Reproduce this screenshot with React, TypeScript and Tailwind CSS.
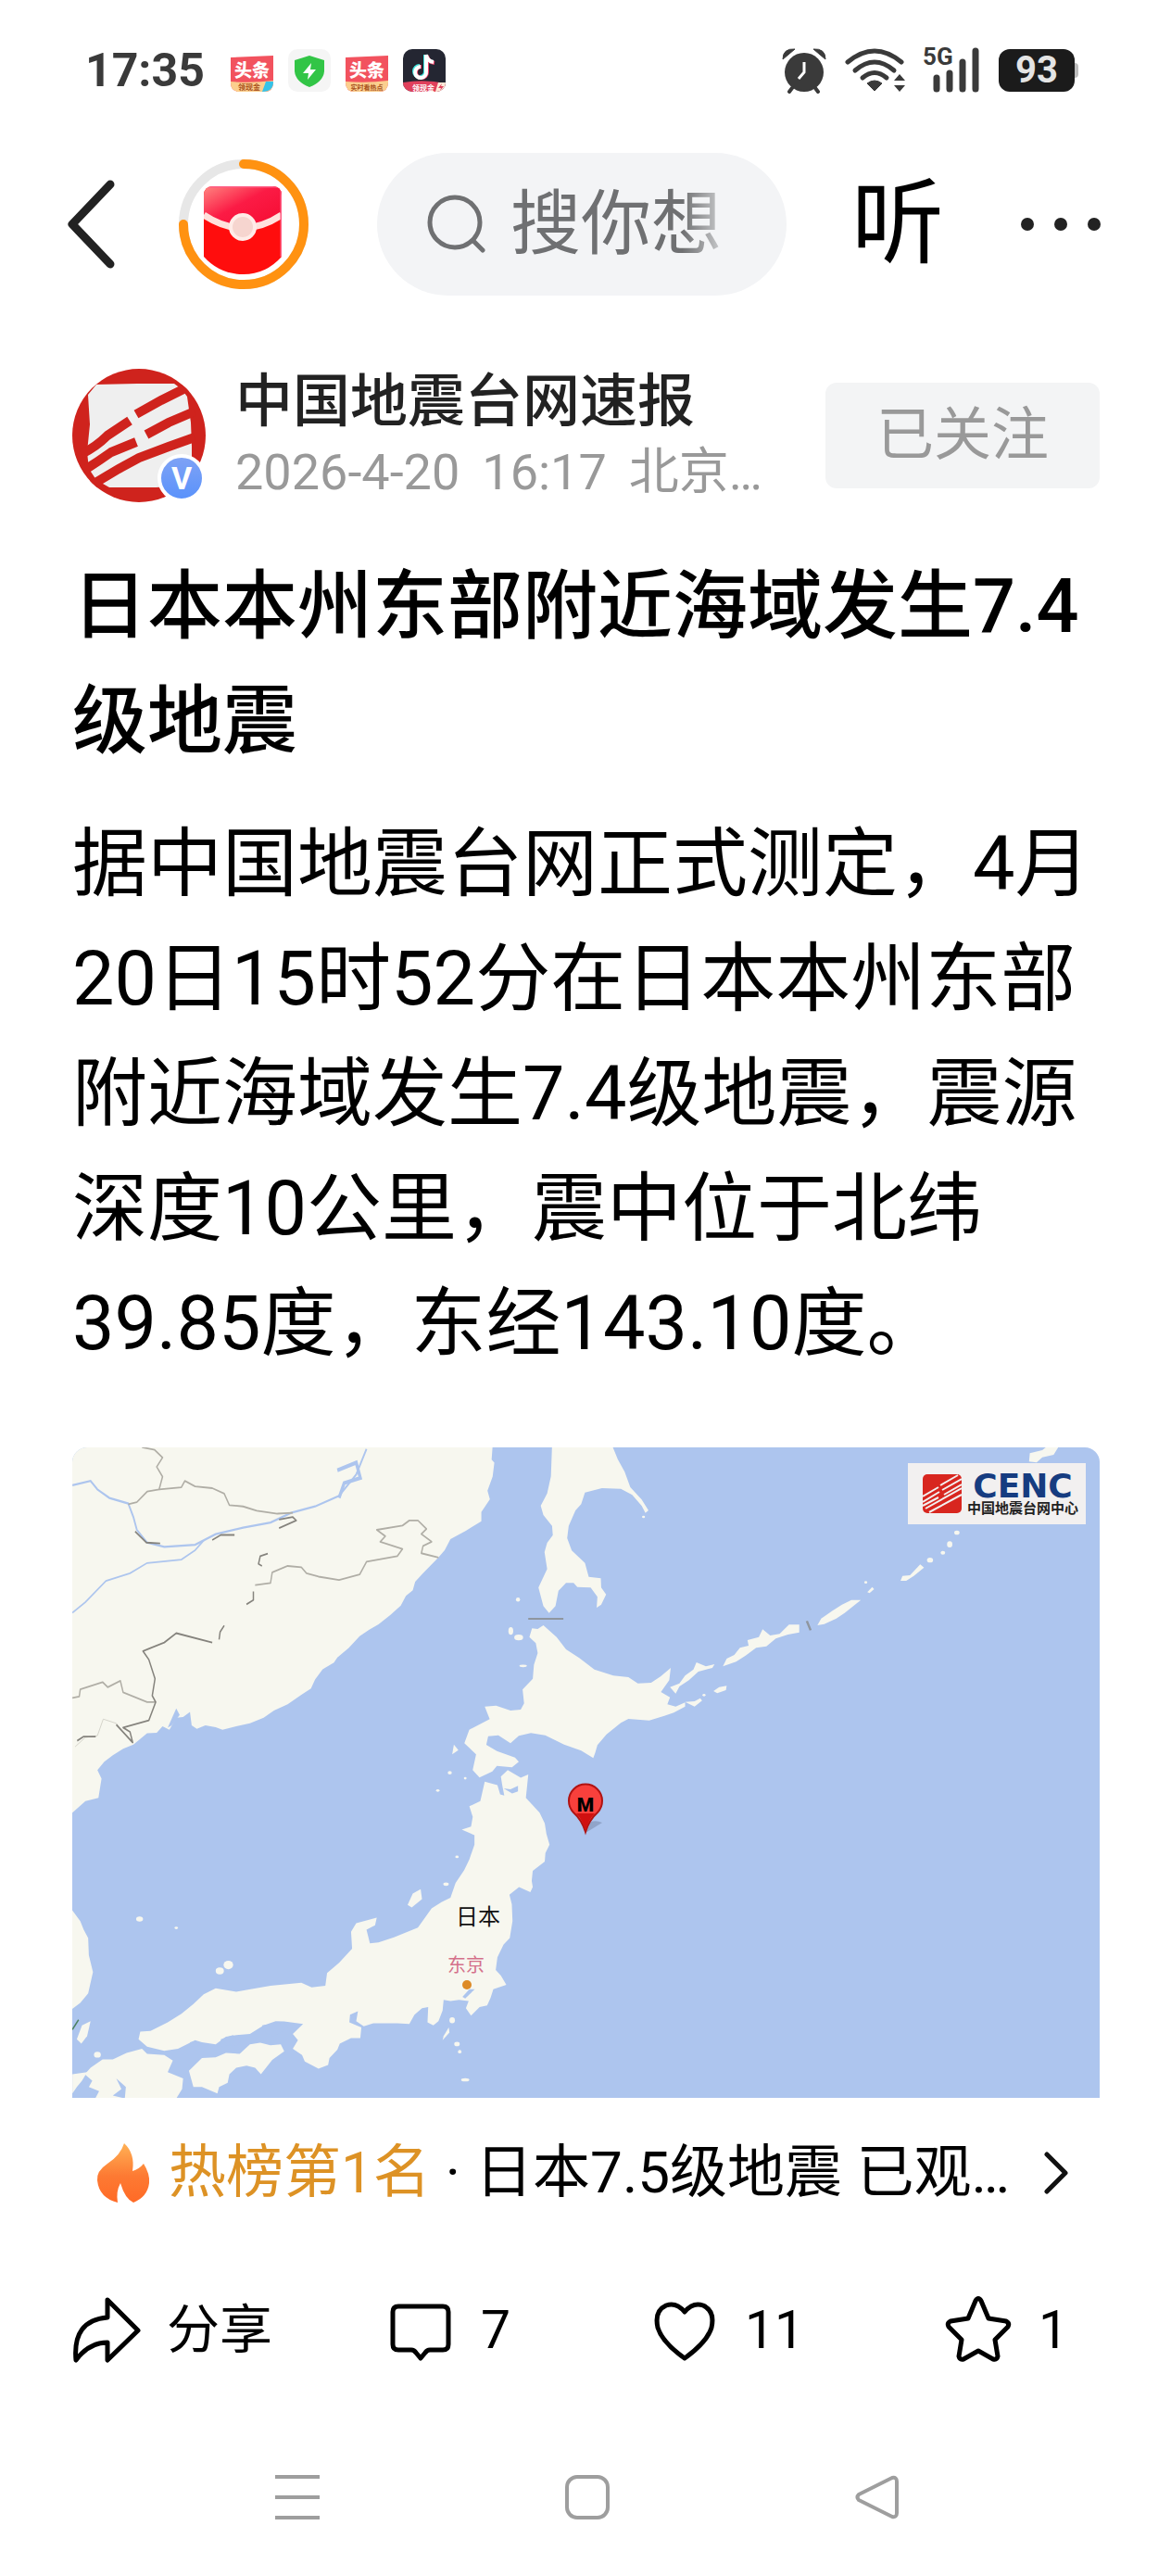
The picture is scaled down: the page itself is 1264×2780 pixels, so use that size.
import React from 'react';

const StatusBar: React.FC = () => (
  <div className="flex h-[152px] items-center justify-between pl-[92px] pr-[100px] text-[#3a3a3a]">
    <div className="flex items-center gap-4">
      <span className="mr-3 text-[50px] leading-none font-bold">17:35</span>
      <ToutiaoIcon label="领现金" flash />
      <svg viewBox="0 0 46 46" className="size-[46px]" aria-hidden="true">
        <rect width="46" height="46" rx="10" fill="#f5f5f5" />
        <path d="M23 7 39 12V24Q38 35 23 41 8 35 7 24V12Z" fill="#32c546" />
        <path d="M25 15 16 26H22L21 33 30 22H24Z" fill="#fff" />
      </svg>
      <ToutiaoIcon label="实时看热点" />
      <svg viewBox="0 0 46 46" className="size-[46px]" aria-hidden="true">
        <clipPath id="douyin">
          <rect width="46" height="46" rx="10" />
        </clipPath>
        <g clipPath="url(#douyin)">
          <rect width="46" height="46" fill="#242632" />
          <g fill="none" strokeWidth="4">
            <path d="M24 6V24A6 6 0 1 1 18 18M24 6Q25 13 32 14" stroke="#3ee6e0" />
            <path d="M26 7V25A6 6 0 1 1 20 19M26 7Q27 14 34 15" stroke="#f2446b" />
            <path d="M25 6V24A6 6 0 1 1 19 19M25 6Q26 13 33 14" stroke="#fff" />
          </g>
          <path d="M0 36Q23 32 46 37V46H0Z" fill="#e0405c" />
          <path d="M38 36H46V46H35Z" fill="#fde9d8" />
          <path d="M42 37 38 42H41L40 45 44 40H41Z" fill="#e0405c" />
          <text x="10" y="45" fontSize="8" fontWeight="700" fill="#fff">领现金</text>
        </g>
      </svg>
    </div>
    <div className="flex items-center">
      <svg viewBox="0 0 48 50" className="mr-5 h-[50px] w-[48px]" aria-hidden="true">
        <circle cx="24" cy="27" r="21" fill="currentColor" />
        <path d="M11 44 8 48M36 44 39 48" stroke="currentColor" strokeWidth="4" strokeLinecap="round" />
        <path d="M1 13Q1 1 14 2ZM47 13Q47 1 34 2Z" fill="currentColor" stroke="currentColor" strokeLinejoin="round" />
        <path d="M24 16V27L18 34" fill="none" stroke="#fff" strokeWidth="3" />
      </svg>
      <svg viewBox="0 0 66 50" className="mr-[18px] h-[50px] w-[66px]" aria-hidden="true">
        <g fill="none" stroke="currentColor" strokeWidth="5" strokeLinecap="round">
          <path d="M3 16Q32-8 61 16" />
          <path d="M11 25Q32 7 53 25" />
          <path d="M19 33Q32 22 45 33" />
        </g>
        <path d="M24 39Q32 33 40 39L32 47Z" fill="currentColor" stroke="currentColor" strokeLinejoin="round" />
        <path d="M59 29 65 36H53ZM59 48 65 41H53Z" fill="currentColor" />
      </svg>
      <div className="relative mr-5 h-[50px] w-[62px]">
        <span className="absolute top-0 left-0 text-[26px] leading-5 font-bold">5G</span>
        <svg viewBox="0 0 62 50" className="h-full w-full" aria-hidden="true">
          <path d="M15 33V45M29 28V45M43 16V45M57 4V45" stroke="currentColor" strokeWidth="7" strokeLinecap="round" />
        </svg>
      </div>
      <div className="flex items-center">
        <span className="flex h-[46px] w-[82px] items-center justify-center rounded-xl bg-[#1b1b1b] text-[40px] leading-none font-bold text-[#e4e4e4]">
          93
        </span>
        <span className="h-4 w-1 rounded-r bg-[#bdbdbd]" />
      </div>
    </div>
  </div>
);

const ToutiaoIcon: React.FC<{ label: string; flash?: boolean }> = ({ label, flash }) => (
  <svg viewBox="0 0 46 46" className="size-[46px]" aria-hidden="true">
    <path d="M0 9 46 7V36Q46 46 36 46H10Q0 46 0 36Z" fill="#f2525e" />
    <path d="M0 35Q23 37 46 34V36Q46 46 36 46H10Q0 46 0 36Z" fill="#fbcf8e" />
    {flash && <path d="M38 35H46Q46 46 34 46Z" fill="#35c3ea" />}
    <text x="23" y="30" textAnchor="middle" fontSize="19" fontWeight="900" fill="#fff">头条</text>
    <text x={flash ? 20 : 23} y="44" textAnchor="middle" fontSize={flash ? 8 : 7} fontWeight="700" fill="#a8511c">{label}</text>
  </svg>
);

const Header: React.FC = () => (
  <header className="flex h-[180px] items-center pr-[76px] pl-[72px]">
    <button aria-label="返回" className="mr-[68px]">
      <svg viewBox="0 0 53 98" className="h-[98px] w-[53px]" fill="none" stroke="#222" strokeWidth="9" strokeLinecap="round" strokeLinejoin="round">
        <path d="M47 6 6 49 47 92" />
      </svg>
    </button>
    <button aria-label="红包" className="mr-[74px]">
      <svg viewBox="0 0 140 140" className="size-[140px]">
        <defs>
          <linearGradient id="packet" x1="0" y1="0" x2="1" y2="1">
            <stop offset="0" stopColor="#ff8580" />
            <stop offset="0.45" stopColor="#fb1b45" />
            <stop offset="1" stopColor="#f50a30" />
          </linearGradient>
          <clipPath id="packetClip">
            <path d="M27 39Q27 29 37 29H101Q111 29 111 39V105Q94 124 70 124 44 124 27 105Z" />
          </clipPath>
        </defs>
        <circle cx="70" cy="70" r="65" fill="none" stroke="#e7e7e7" strokeWidth="10" />
        <path d="M70 5A65 65 0 1 1 5 70" fill="none" stroke="#ff9211" strokeWidth="10" strokeLinecap="round" />
        <g clipPath="url(#packetClip)">
          <rect x="27" y="29" width="84" height="96" fill="#ff0d0d" />
          <path d="M27 29H111V60Q70 88 27 60Z" fill="url(#packet)" />
          <path d="M27 60Q69 88 111 60" fill="none" stroke="#ffe1dc" strokeWidth="7" />
          <path d="M27 29H111V105" fill="none" stroke="#ff5d84" strokeWidth="3" />
        </g>
        <circle cx="69" cy="73" r="13" fill="#f6d5cf" stroke="#ffece8" strokeWidth="4" />
      </svg>
    </button>
    <label className="flex h-[154px] min-w-0 flex-1 items-center gap-6 rounded-full bg-[#f3f4f6] pr-[60px] pl-[54px]">
      <svg viewBox="0 0 66 66" className="size-[66px] shrink-0" fill="none" stroke="#6f7072" strokeWidth="5" strokeLinecap="round">
        <circle cx="30" cy="31" r="27" />
        <path d="M50 51 60 61" />
      </svg>
      <input
        aria-label="搜索"
        placeholder="搜你想"
        className="h-[110px] w-full min-w-0 bg-transparent text-[76px] outline-none placeholder:text-[#6f7072] [mask-image:linear-gradient(to_right,black_78%,transparent_104%)]"
      />
    </label>
    <button className="mr-[83px] ml-[70px] shrink-0 text-[100px] leading-none text-black">听</button>
    <button aria-label="更多" className="flex gap-[22px]">
      <span className="size-[14px] rounded-full bg-[#222]" />
      <span className="size-[14px] rounded-full bg-[#222]" />
      <span className="size-[14px] rounded-full bg-[#222]" />
    </button>
  </header>
);

const Author: React.FC = () => (
  <div className="mt-[66px] flex h-[144px] items-center">
    <div className="relative mr-8 size-[144px] shrink-0">
      <svg viewBox="0 0 144 144" className="h-full w-full" aria-hidden="true">
        <clipPath id="avatar">
          <circle cx="72" cy="72" r="72" />
        </clipPath>
        <g clipPath="url(#avatar)">
          <rect width="144" height="144" fill="#cf231d" />
          <path d="M17 28 26 17 70 16 110 16 118 22 124 30 126 44 128 58 129 84 129 126 90 128 40 128 26 120 18 108 16 90 19 60Z" fill="#efefef" />
          <g fill="none" stroke="#cf231d" strokeWidth="10">
            <path d="M10 92Q26 84 38 72L62 56" />
            <path d="M69 49 96 34 128 18" />
            <path d="M12 110Q28 100 42 90L69 79" />
            <path d="M80 71 104 58 132 46" />
            <path d="M20 126 50 108 72 96 104 84 132 74" />
          </g>
        </g>
      </svg>
      <span className="absolute right-0 bottom-0 flex size-[52px] items-center justify-center rounded-full border-4 border-white bg-gradient-to-b from-[#7ea2f5] to-[#5a92fb] text-[34px] leading-none font-bold text-white">
        V
      </span>
    </div>
    <div className="min-w-0 flex-1">
      <p className="text-[62px] leading-[80px] font-medium text-[#222]">中国地震台网速报</p>
      <p className="flex gap-6 text-[54px] leading-[72px] whitespace-nowrap text-[#999]">
        <span>2026-4-20</span>
        <span>16:17</span>
        <span>北京…</span>
      </p>
    </div>
    <button className="h-[114px] w-[296px] shrink-0 rounded-xl bg-[#f3f4f5] text-[62px] leading-none text-[#999]">已关注</button>
  </div>
);

const EpicenterMap: React.FC = () => (
  <div className="relative mt-[71px] overflow-hidden rounded-t-2xl">
    <svg viewBox="0 0 1109 702" className="block w-full" role="img" aria-label="震中位置地图">
      <rect width="1109" height="702" fill="#adc5ee" />
      <g transform="translate(-8 -12) scale(0.37 0.459)">
        <g fill="#f7f7ef">
          {/* mainland */}
          <path d="M0 0H1250L1245 55 1253 62 1248 95 1233 128 1240 148 1215 178 1215 200 1170 222 1125 242 1108 268 1090 285 1045 322 1022 342 1015 362 995 375 980 398 950 420 915 442 888 455 860 470 828 498 795 520 785 532 752 548 730 572 718 593 690 608 650 630 610 645 580 662 540 675 500 682 460 690 440 684 410 680 385 688 370 680 365 648 345 660 325 662 305 690 285 682 268 697 240 698 200 725 170 735 140 750 115 765 95 785 107 805 98 850 60 858 22 885H0Z" />
          {/* korea and tsushima */}
          <path d="M0 1100 22 1115 45 1140 55 1160 68 1180 70 1220 82 1260 68 1310 45 1332 0 1360Z" />
          <path d="M50 1385 75 1375 65 1410 48 1428 35 1418Z" />
          {/* honshu */}
          <path d="M1225 812 1262 820 1270 842 1282 845 1276 820 1272 800 1292 785 1330 803 1352 795 1345 850 1362 865 1385 885 1400 910 1405 935 1414 960 1402 980 1400 1000 1365 1022 1362 1045 1365 1060 1358 1072 1325 1060 1297 1078 1304 1100 1306 1140 1298 1180 1280 1195 1262 1225 1257 1255 1272 1268 1288 1290 1250 1300 1242 1320 1232 1338 1210 1342 1185 1362 1170 1345 1178 1328 1150 1325 1125 1328 1105 1325 1102 1350 1090 1375 1075 1385 1058 1378 1060 1342 1042 1345 1020 1360 1005 1382 970 1380 900 1380 872 1387 850 1375 855 1352 832 1360 830 1378 865 1390 862 1415 835 1415 802 1428 795 1442 772 1462 768 1478 740 1487 700 1470 692 1455 665 1440 680 1420 665 1405 695 1382 640 1376 615 1375 580 1385 540 1405 500 1408 470 1412 440 1430 400 1425 380 1420 330 1440 290 1445 240 1435 215 1418 220 1400 250 1398 300 1378 340 1358 375 1335 405 1312 440 1298 500 1306 530 1302 600 1292 690 1285 720 1296 760 1292 765 1262 800 1238 838 1205 835 1165 850 1145 910 1132 905 1150 880 1160 890 1192 915 1190 960 1178 1030 1155 1070 1110 1100 1095 1125 1085 1140 1050 1165 1020 1180 995 1195 960 1195 938 1158 925 1185 918 1190 895 1180 870 1212 858Z" />
          {/* shikoku and kyushu */}
          <path d="M362 1492 400 1462 440 1460 470 1450 510 1452 540 1430 570 1426 600 1432 630 1430 640 1446 605 1466 572 1500 555 1485 530 1480 500 1485 480 1500 475 1520 450 1530 445 1545 400 1530 375 1530Z" />
          <path d="M58 1500 75 1485 110 1465 140 1465 180 1450 225 1440 240 1452 290 1455 315 1468 300 1495 345 1510 342 1535 315 1570 80 1570 100 1540 70 1530 80 1515Z" />
          <path d="M22 1500 65 1495 50 1515 35 1530 22 1545Z" />
          {/* sado, oki and the small islands */}
          <path d="M1015 1075 1038 1065 1042 1088 1012 1108 1000 1102Z" />
          <path d="M1135 725 1148 738 1130 748Z" />
          <path d="M1105 1410 1120 1390 1122 1402 1102 1420Z" />
          <ellipse cx="477" cy="1243" rx="14" ry="10" />
          <ellipse cx="452" cy="1257" rx="12" ry="8" />
          <ellipse cx="218" cy="1135" rx="10" ry="6" />
          <ellipse cx="325" cy="1156" rx="5" ry="3" />
          <ellipse cx="95" cy="1454" rx="10" ry="7" />
          <ellipse cx="1130" cy="1373" rx="8" ry="7" />
          <ellipse cx="1144" cy="1429" rx="8" ry="5" />
          <ellipse cx="1152" cy="1447" rx="5" ry="4" />
          <ellipse cx="1168" cy="1513" rx="12" ry="4" />
          <ellipse cx="1301" cy="458" rx="7" ry="9" />
          <ellipse cx="1324" cy="473" rx="13" ry="7" />
          <ellipse cx="1322" cy="384" rx="6" ry="5" />
          <ellipse cx="1337" cy="540" rx="11" ry="3" />
          <ellipse cx="1123" cy="791" rx="6" ry="4" />
          <ellipse cx="1088" cy="833" rx="5" ry="3" />
          <ellipse cx="1168" cy="804" rx="4" ry="3" />
          <ellipse cx="1144" cy="989" rx="5" ry="3" />
          <ellipse cx="1112" cy="1053" rx="8" ry="4" />
        </g>
        {/* bays and the inland sea */}
        <g fill="#adc5ee">
          <path d="M1280 828 1300 830 1322 822 1322 835 1305 840Z" />
          <path d="M575 1385 640 1378 650 1390 610 1412 585 1402Z" />
          <path d="M455 1418 490 1408 512 1422 500 1432 455 1434Z" />
          <path d="M1160 1318 1180 1300 1196 1300 1168 1322Z" />
          <path d="M365 1425 382 1422 385 1432 367 1435Z" />
          <path d="M150 1510 178 1530 175 1557 140 1550 165 1535Z" />
          <path d="M300 685 325 640 335 655 312 680Z" />
        </g>
        {/* rivers */}
        <g fill="none" stroke="#adc5ee">
          <path d="M22 115 75 105 95 125 130 145 185 158 200 190 210 220 240 250 290 260 380 255 440 230 520 215 600 203 660 180 730 165 800 140 850 90 880 30" strokeWidth="5" />
          <path d="M22 415 60 390 120 340 190 322 240 298 340 290 380 268 405 245" strokeWidth="4" />
          <path d="M795 80 850 62 862 98 815 110 800 145" strokeWidth="9" />
        </g>
        {/* borders */}
        <g fill="none" stroke="#b0aea6" strokeWidth="4" strokeLinejoin="round">
          <path d="M225 26 262 32 285 50 268 72 285 95 275 125 240 130 210 155 185 160" />
          <path d="M275 125 340 120 350 105 380 118 430 122 465 135 480 162 520 165 560 175 620 182 665 180" />
          <path d="M1090 285 1040 275 1045 258 1070 248 1040 230 1055 218 1030 198 1005 198 985 210 910 220 935 235 920 248 985 265 970 282 880 295 860 325 800 338 740 330 705 322 690 308 650 305 605 320 600 345 555 350" />
          <path d="M22 615 42 612 45 595 110 578 125 590 162 575 170 602 240 625 265 625" />
          <path d="M30 730 60 708 95 704 112 665 150 675 195 720" stroke="#cfcdc4" strokeWidth="2" />
        </g>
        <g fill="none" stroke="#85837d" strokeWidth="4" strokeLinejoin="round">
          <path d="M430 485 325 463 290 485 228 505 245 525 263 570 255 610 265 625 245 668 170 685 190 695 198 720 150 678" />
          <path d="M205 224 238 250 278 252M430 244 455 232 495 232M625 216 675 198 665 190 625 196" />
          <path d="M592 276 570 282 565 300 575 305M550 365 550 385 530 395M465 445 453 460 450 478M36 716 55 706 90 706" />
          <path d="M22 1395 40 1372" stroke="#4b8060" />
        </g>
      </g>
      <g transform="translate(482 -12) scale(0.408 0.3333)">
        <g fill="#f7f7ef">
          {/* sakhalin */}
          <path d="M88 30 85 130 75 185 58 225 65 255 88 290 90 320 75 345 68 375 75 430 52 490 65 550 80 572 97 550 105 500 125 475 145 475 155 488 190 490 208 520 206 555 218 545 231 512 218 490 217 460 185 455 175 410 140 370 128 330 132 290 150 240 165 220 175 182 220 168 270 170 300 190 325 225 335 248 343 240 325 205 295 165 280 115 262 75 247 30Z" />
          {/* hokkaido */}
          <path d="M65 612 100 650 125 690 160 718 200 755 250 775 290 780 315 800 350 798 375 778 402 750 398 790 376 828 400 845 393 868 415 875 440 862 440 875 410 895 385 905 345 920 290 915 270 928 232 965 208 1000 202 1025 197 1042 165 1018 120 998 70 968 32 961 0 970-22 994-54 968-81 971-86 999-58 1019-10 1040 0 1054-18 1072-58 1067-70 1085-104 1105-122 1081-113 1030-144 994-131 950-77 916-90 875-60 872-22 888 5 885 14 865 10 820 37 785 40 740 50 702 45 670 28 650 35 622 50 624Z" />
          {/* kuril chain */}
          <path d="M400 812 425 800 440 775 462 755 470 732 495 745 518 738 512 750 475 762 450 790 425 810 415 833Z" />
          <path d="M540 745 550 720 570 708 585 685 608 678 605 660 635 650 645 625 665 645 690 640 715 610 742 610 742 635 712 642 680 655 655 680 628 685 600 710 575 730Z" />
          <path d="M790 612 800 590 830 565 855 545 880 530 905 530 885 550 862 572 840 590 808 608Z" />
          <path d="M1010 468 1015 452 1035 450 1062 415 1072 425 1045 452 1025 468Z" />
          <path d="M922 505 935 488 940 495 928 508Z" />
          <path d="M1350 82 1352 55 1385 45 1400 30H1430L1415 60 1385 68 1370 85Z" />
          <path d="M515 825 530 812 550 808 548 822 525 832Z" />
          <path d="M440 860 465 858 480 848 485 856 465 875Z" />
          <circle cx="1088" cy="401" r="8" />
          <circle cx="1122" cy="377" r="6" />
          <ellipse cx="1140" cy="350" rx="7" ry="10" />
          <circle cx="1159" cy="312" r="7" />
          <circle cx="490" cy="838" r="4" />
          <circle cx="918" cy="473" r="4" />
          <circle cx="330" cy="261" r="4" />
        </g>
        <path d="M25 591H118M762 598 772 628" fill="none" stroke="#8f969f" strokeWidth="6" />
      </g>

      <text x="438" y="515" textAnchor="middle" fontSize="24" fill="#111">日本</text>
      <text x="425" y="566" textAnchor="middle" fontSize="20" fill="#d4708a">东京</text>
      <circle cx="426" cy="580" r="5" fill="#dd8a26" />

      <path d="M554 416 572 405Q566 402 560 404Z" fill="#7d8db0" opacity="0.6" />
      <path d="M554 415Q550 402 541 394A18 18 0 1 1 567 394Q558 402 554 415Z" fill="#f8403c" stroke="#b01312" strokeWidth="2" />
      <path d="M554 414Q551 402 544 395H564Q557 402 554 414Z" fill="#d01010" />
      <text x="554" y="393" textAnchor="middle" fontSize="21" fontWeight="900" fill="#000">M</text>
    </svg>
    <div className="absolute top-[17px] right-[15px] flex h-[66px] w-[192px] items-center gap-[6px] bg-[#f2f0f0] pl-4">
      <svg viewBox="0 0 42 42" className="size-[42px] shrink-0" aria-hidden="true">
        <rect width="42" height="42" rx="5" fill="#d8261f" />
        <g stroke="#f2f0f0" strokeWidth="2">
          <path d="M0 24 17 14M0 30 18 19M3 37 42 15M0 34 17 25M19 12 38 1M21 17 42 5M23 22 42 11M7 41 42 22" />
        </g>
      </svg>
      <div className="text-center">
        <p className="font-['DejaVu_Sans'] text-[36px] leading-8 font-bold text-[#163c80]">CENC</p>
        <p className="text-[15px] leading-4 font-bold whitespace-nowrap text-[#222]">中国地震台网中心</p>
      </div>
    </div>
  </div>
);

const HotRank: React.FC = () => (
  <a href="#hot" className="mt-[31px] flex h-[100px] items-center pr-[34px] pl-[26px] text-[62px] leading-[80px] text-black">
    <svg viewBox="0 0 58 66" className="mr-5 h-[66px] w-[58px] shrink-0" aria-hidden="true">
      <defs>
        <linearGradient id="flame" x1="0" y1="0" x2="0" y2="1">
          <stop offset="0" stopColor="#ffb155" />
          <stop offset="0.55" stopColor="#fd7a33" />
          <stop offset="1" stopColor="#ff6a26" />
        </linearGradient>
      </defs>
      <path d="M30 1Q42 12 39 31 46 29 51 23 58 34 57 44 55 59 40 65 31 61 26 44 21 53 23 65 3 60 1 41 0 31 12 23 26 14 30 1Z" fill="url(#flame)" />
    </svg>
    <span className="shrink-0 text-[#dd9225]">热榜第1名</span>
    <span className="mx-4 shrink-0">·</span>
    <span className="flex-1 whitespace-nowrap">日本7.5级地震 已观…</span>
    <svg viewBox="0 0 26 46" className="h-[46px] w-[26px] shrink-0" fill="none" stroke="#111" strokeWidth="5" strokeLinecap="round" strokeLinejoin="round" aria-hidden="true">
      <path d="M3 3 23 23 3 43" />
    </svg>
  </a>
);

const iconClass = 'h-[72px] w-[74px]';

const Actions: React.FC = () => (
  <div className="mt-[69px] grid h-[100px] grid-cols-[339fr_285fr_317fr_auto] items-center pr-[34px] text-[57px] leading-none text-black">
    <button className="flex items-center gap-7">
      <svg viewBox="0 0 74 72" className={iconClass} fill="none" stroke="currentColor" strokeWidth="5" strokeLinejoin="round">
        <path d="M38 4 71 37 38 69V50Q18 50 4 69 0 26 38 23Z" />
      </svg>
      分享
    </button>
    <button className="flex items-center gap-7" aria-label="评论 7">
      <svg viewBox="0 0 74 72" className={iconClass} fill="none" stroke="currentColor" strokeWidth="5" strokeLinejoin="round">
        <path d="M13 11H61Q67 11 67 17V52Q67 58 61 58H47Q44 58 42 61L37 67 32 61Q30 58 27 58H13Q7 58 7 52V17Q7 11 13 11Z" />
      </svg>
      7
    </button>
    <button className="flex items-center gap-7" aria-label="点赞 11">
      <svg viewBox="0 0 74 72" className={iconClass} fill="none" stroke="currentColor" strokeWidth="5" strokeLinejoin="round">
        <path d="M37 17Q28 6 17 10 4 16 8 34 13 50 37 67 61 50 66 34 70 16 57 10 46 6 37 17Z" />
      </svg>
      11
    </button>
    <button className="flex items-center gap-7" aria-label="收藏 1">
      <svg viewBox="0 0 74 72" className={iconClass} fill="none" stroke="currentColor" strokeWidth="5" strokeLinejoin="round">
        <path d="M34 5Q37 0 40 5L48 24 67 27Q71 29 69 33L55 47 58 65Q57 69 53 68L37 59 21 68Q17 69 16 65L19 47 5 33Q3 29 7 27L26 24Z" />
      </svg>
      1
    </button>
  </div>
);

const NavBar: React.FC = () => (
  <nav className="mt-[46px] grid h-[170px] grid-cols-3 items-center justify-items-center pr-[161px] pl-[165px] text-[#9e9e9e]">
    <button aria-label="最近任务">
      <svg viewBox="0 0 48 48" className="size-12" stroke="currentColor" strokeWidth="4">
        <path d="M0 2H48M0 24H48M0 46H48" />
      </svg>
    </button>
    <button aria-label="主屏幕">
      <svg viewBox="0 0 48 48" className="size-12" fill="none" stroke="currentColor" strokeWidth="4">
        <rect x="2" y="2" width="44" height="44" rx="11" />
      </svg>
    </button>
    <button aria-label="返回上一页">
      <svg viewBox="0 0 48 48" className="size-12" fill="none" stroke="currentColor" strokeWidth="4" strokeLinejoin="round">
        <path d="M40 3Q45 2 45 7V41Q45 46 40 45L4 27Q1 24 4 21Z" />
      </svg>
    </button>
  </nav>
);

const App: React.FC = () => {
  return (
    <div className="bg-white font-[Roboto,'Noto_Sans_CJK_SC',sans-serif]" lang="zh-CN">
      <StatusBar />
      <Header />
      <main className="pr-[77px] pl-[78px]">
        <Author />
        <h1 className="mt-[51px] text-[81px] leading-[124px] font-medium text-black">日本本州东部附近海域发生7.4级地震</h1>
        <p className="mt-[30px] text-[81px] leading-[124px] text-black">
          据中国地震台网正式测定，4月20日15时52分在日本本州东部附近海域发生7.4级地震，震源深度10公里，震中位于北纬39.85度，东经143.10度。
        </p>
        <EpicenterMap />
        <HotRank />
        <Actions />
      </main>
      <NavBar />
    </div>
  );
};

export default App;
